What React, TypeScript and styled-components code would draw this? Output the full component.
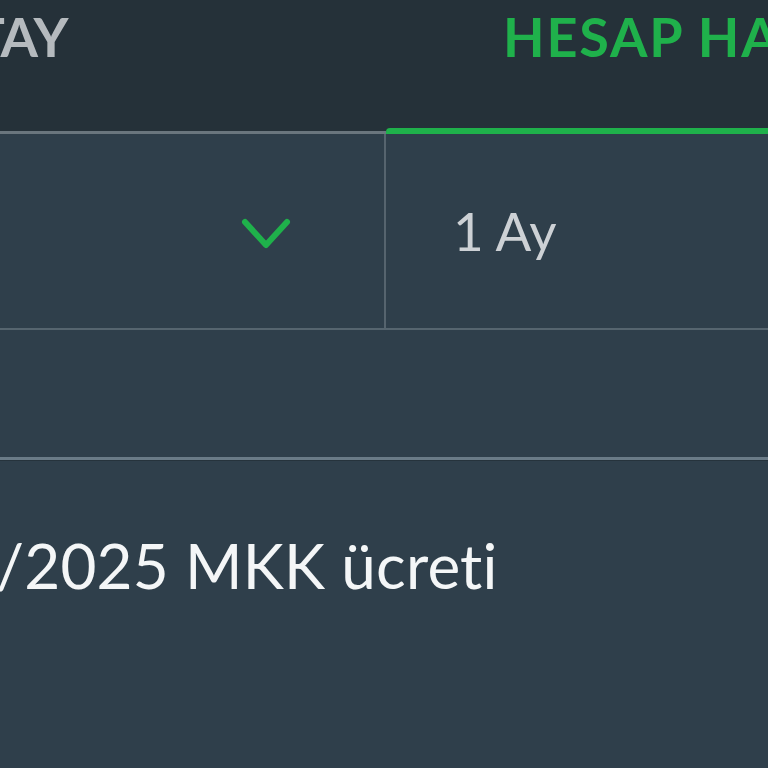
import React from "react";
import styled, { createGlobalStyle } from "styled-components";

const Global = createGlobalStyle`
  html, body { margin: 0; padding: 0; background: #2f3f4b; }
  body {
    font-family: Lato, "Noto Sans", sans-serif;
    overflow: hidden;
    font-variant-ligatures: none;
    font-feature-settings: "liga" 0, "clig" 0;
  }
`;

const Page = styled.div`
  width: 768px;
  height: 768px;
  overflow: hidden;
  background: #2f3f4b;
  display: flex;
  flex-direction: column;
`;

const TabBar = styled.div`
  display: grid;
  grid-template-columns: 384px 384px;
  height: 128px;
  background: #253139;
`;

const Tab = styled.div<{ $active?: boolean; $align: "start" | "end"; $pad: number; $spacing: number }>`
  display: flex;
  justify-content: ${(p) => (p.$align === "end" ? "flex-end" : "flex-start")};
  align-items: flex-start;
  padding-top: 4px;
  ${(p) => (p.$align === "end" ? `padding-right: ${p.$pad}px;` : `padding-left: ${p.$pad}px;`)}
  overflow: hidden;
  white-space: nowrap;
  font-size: 54px;
  font-weight: 700;
  letter-spacing: ${(p) => p.$spacing}px;
  color: ${(p) => (p.$active ? "#1fb14b" : "#b5babe")};
`;

const Indicators = styled.div`
  display: grid;
  grid-template-columns: 386px 382px;
  align-items: end;
  height: 6px;
  background: #253139;
`;

const Indicator = styled.div<{ $active?: boolean }>`
  height: ${(p) => (p.$active ? "6px" : "3px")};
  background: ${(p) => (p.$active ? "#1fb14b" : "#6a767e")};
  border-radius: ${(p) => (p.$active ? "4px 0 0 0" : "0")};
`;

const FilterRow = styled.div`
  display: grid;
  grid-template-columns: 384px 2px 382px;
  height: 194px;
  border-bottom: 2px solid #56656f;
`;

const VDivider = styled.div`
  background: #56646e;
`;

const SelectCell = styled.div`
  display: flex;
  justify-content: flex-end;
  align-items: center;
  padding-right: 92px;
  padding-top: 6px;
`;

const PeriodCell = styled.div`
  display: flex;
  align-items: center;
  padding-left: 67px;
  font-size: 53px;
  font-weight: 400;
  color: #cdd1d5;
  padding-bottom: 2px;
`;

const EmptyRow = styled.div`
  height: 127px;
  border-bottom: 3px solid #6a7b87;
  box-shadow: 0 1px 0 #26333c;
`;

const ListItem = styled.div`
  display: flex;
  align-items: center;
  padding-top: 68px;
  margin-left: -4px;
  font-size: 62px;
  font-weight: 400;
  color: #f4f6f7;
  white-space: nowrap;
  letter-spacing: 0.2px;
`;

const Chevron = () => (
  <svg width="52" height="32" viewBox="0 0 52 32" fill="none">
    <path
      d="M5 4 L26 27 L47 4"
      stroke="#1fb14b"
      strokeWidth="6"
      strokeLinecap="round"
      strokeLinejoin="round"
    />
  </svg>
);

export default function App() {
  return (
    <>
      <Global />
      <Page>
        <TabBar>
          <Tab $align="end" $pad={316} $spacing={-0.5}>PORTFÖY DETAY</Tab>
          <Tab $align="start" $pad={119} $spacing={1.8} $active>HESAP HAREKETLERİ</Tab>
        </TabBar>
        <Indicators>
          <Indicator />
          <Indicator $active />
        </Indicators>
        <FilterRow>
          <SelectCell>
            <Chevron />
          </SelectCell>
          <VDivider />
          <PeriodCell>1 Ay</PeriodCell>
        </FilterRow>
        <EmptyRow />
        <ListItem>/2025 MKK ücreti</ListItem>
      </Page>
    </>
  );
}
